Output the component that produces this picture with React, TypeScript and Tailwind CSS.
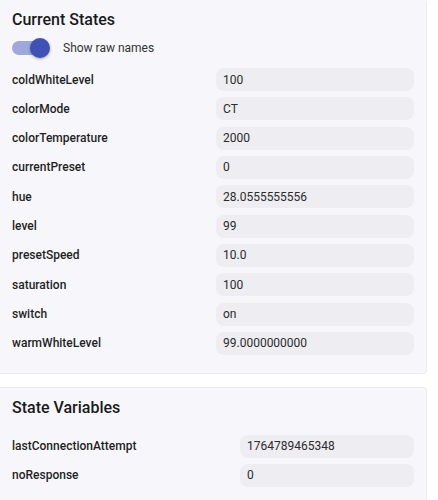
import React, { useState } from 'react';

type Row = { name: string; value: string };

const currentStates: Row[] = [
  { name: 'coldWhiteLevel', value: '100' },
  { name: 'colorMode', value: 'CT' },
  { name: 'colorTemperature', value: '2000' },
  { name: 'currentPreset', value: '0' },
  { name: 'hue', value: '28.0555555556' },
  { name: 'level', value: '99' },
  { name: 'presetSpeed', value: '10.0' },
  { name: 'saturation', value: '100' },
  { name: 'switch', value: 'on' },
  { name: 'warmWhiteLevel', value: '99.0000000000' },
];

const stateVariables: Row[] = [
  { name: 'lastConnectionAttempt', value: '1764789465348' },
  { name: 'noResponse', value: '0' },
];

function Toggle({ checked, onChange }: { checked: boolean; onChange: () => void }) {
  return (
    <button onClick={onChange} className='relative flex h-6 w-[42px] items-center'>
      <span className={`h-[14px] w-[34px] rounded-full ${checked ? 'bg-[#9fa8da]' : 'bg-[#b0b0b0]'}`} />
      <span
        className={`absolute top-[2px] h-5 w-5 rounded-full shadow-[0_1px_3px_rgba(0,0,0,0.35)] ${
          checked ? 'left-[18px] bg-[#3f51b5]' : 'left-0 bg-[#fafafa]'
        }`}
      />
    </button>
  );
}

function StateRows({ rows, labelWidth, gap }: { rows: Row[]; labelWidth: string; gap: string }) {
  return (
    <div className={`flex flex-col ${gap}`}>
      {rows.map((row) => (
        <div key={row.name} className='flex items-center'>
          <div className={`${labelWidth} shrink-0 text-[12px] font-medium text-[#1f1f1f]`}>{row.name}</div>
          <div className='flex h-[23px] flex-1 items-center rounded-lg bg-[#ededf2] px-[7px] text-[12px] text-[#2b2b2b]'>{row.value}</div>
        </div>
      ))}
    </div>
  );
}

export default function App() {
  const [rawNames, setRawNames] = useState<boolean>(true);

  return (
    <div className='flex min-h-[500px] w-[438px] flex-col gap-[13px] bg-white' style={{ fontFamily: 'Roboto, "Noto Sans", sans-serif' }}>
      <div className='mr-[11px] rounded-r border border-l-0 border-t-0 border-[#ebebf0] bg-[#f7f7fb] pb-[18px] pl-3 pr-3 pt-2'>
        <h1 className='text-[16px] font-medium leading-6 text-[#1a1a1a]'>Current States</h1>
        <div className='mt-1 flex items-center gap-[9px]'>
          <Toggle checked={rawNames} onChange={() => setRawNames((prev) => !prev)} />
          <span className='text-[12px] text-[#333]'>Show raw names</span>
        </div>
        <div className='mt-2'>
          <StateRows rows={currentStates} labelWidth='w-[204px]' gap='gap-[6.33px]' />
        </div>
      </div>
      <div className='mr-[11px] rounded-r border border-l-0 border-[#ebebf0] bg-[#f7f7fb] pb-[18px] pl-3 pr-3 pt-2'>
        <h1 className='text-[16px] font-medium leading-6 text-[#1a1a1a]'>State Variables</h1>
        <div className='mt-[15px]'>
          <StateRows rows={stateVariables} labelWidth='w-[228px]' gap='gap-[6px]' />
        </div>
      </div>
    </div>
  );
}
